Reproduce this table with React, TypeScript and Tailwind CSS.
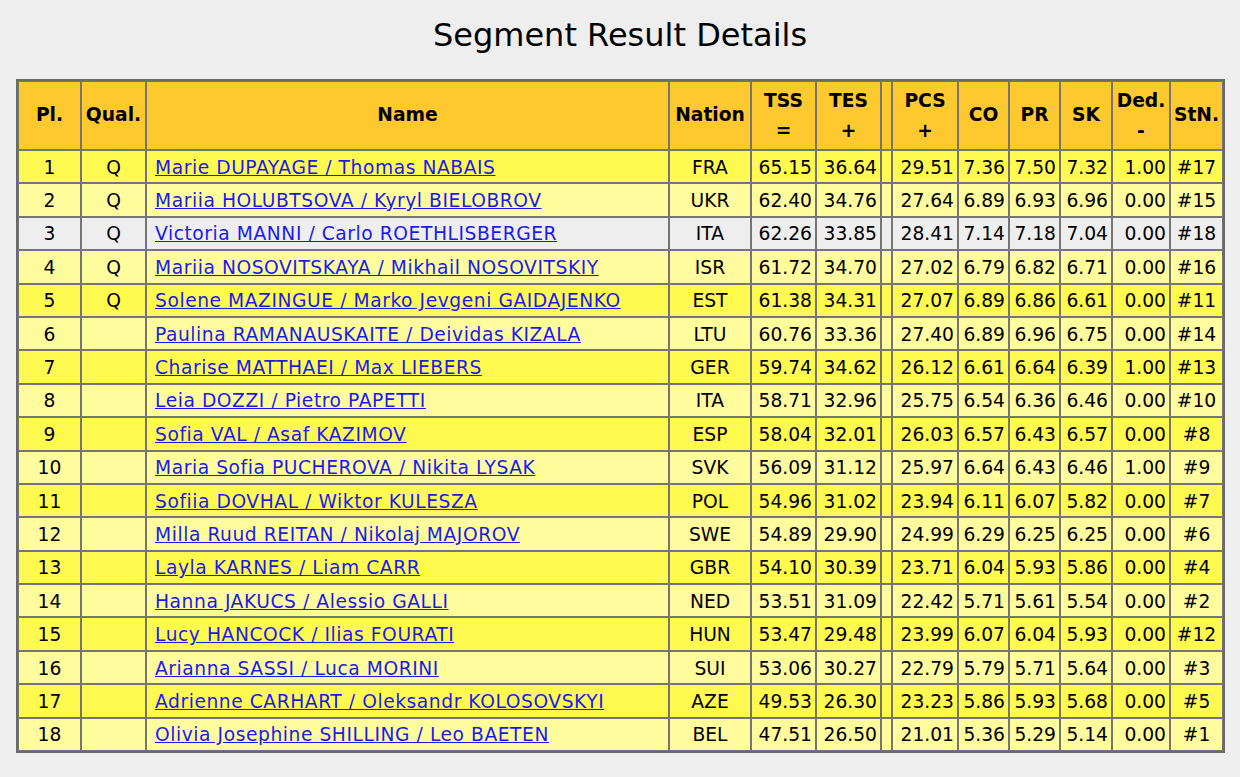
import React from "react";

type Row = {
  pl: number;
  q: string;
  name: string;
  nat: string;
  tss: string;
  tes: string;
  pcs: string;
  co: string;
  pr: string;
  sk: string;
  ded: string;
  stn: string;
};

const raw = `1|Q|Marie DUPAYAGE / Thomas NABAIS|FRA|65.15|36.64|29.51|7.36|7.50|7.32|1.00|#17
2|Q|Mariia HOLUBTSOVA / Kyryl BIELOBROV|UKR|62.40|34.76|27.64|6.89|6.93|6.96|0.00|#15
3|Q|Victoria MANNI / Carlo ROETHLISBERGER|ITA|62.26|33.85|28.41|7.14|7.18|7.04|0.00|#18
4|Q|Mariia NOSOVITSKAYA / Mikhail NOSOVITSKIY|ISR|61.72|34.70|27.02|6.79|6.82|6.71|0.00|#16
5|Q|Solene MAZINGUE / Marko Jevgeni GAIDAJENKO|EST|61.38|34.31|27.07|6.89|6.86|6.61|0.00|#11
6||Paulina RAMANAUSKAITE / Deividas KIZALA|LTU|60.76|33.36|27.40|6.89|6.96|6.75|0.00|#14
7||Charise MATTHAEI / Max LIEBERS|GER|59.74|34.62|26.12|6.61|6.64|6.39|1.00|#13
8||Leia DOZZI / Pietro PAPETTI|ITA|58.71|32.96|25.75|6.54|6.36|6.46|0.00|#10
9||Sofia VAL / Asaf KAZIMOV|ESP|58.04|32.01|26.03|6.57|6.43|6.57|0.00|#8
10||Maria Sofia PUCHEROVA / Nikita LYSAK|SVK|56.09|31.12|25.97|6.64|6.43|6.46|1.00|#9
11||Sofiia DOVHAL / Wiktor KULESZA|POL|54.96|31.02|23.94|6.11|6.07|5.82|0.00|#7
12||Milla Ruud REITAN / Nikolaj MAJOROV|SWE|54.89|29.90|24.99|6.29|6.25|6.25|0.00|#6
13||Layla KARNES / Liam CARR|GBR|54.10|30.39|23.71|6.04|5.93|5.86|0.00|#4
14||Hanna JAKUCS / Alessio GALLI|NED|53.51|31.09|22.42|5.71|5.61|5.54|0.00|#2
15||Lucy HANCOCK / Ilias FOURATI|HUN|53.47|29.48|23.99|6.07|6.04|5.93|0.00|#12
16||Arianna SASSI / Luca MORINI|SUI|53.06|30.27|22.79|5.79|5.71|5.64|0.00|#3
17||Adrienne CARHART / Oleksandr KOLOSOVSKYI|AZE|49.53|26.30|23.23|5.86|5.93|5.68|0.00|#5
18||Olivia Josephine SHILLING / Leo BAETEN|BEL|47.51|26.50|21.01|5.36|5.29|5.14|0.00|#1`;

const rows: Row[] = raw.split("\n").map((l) => {
  const p = l.split("|");
  return {
    pl: Number(p[0]),
    q: p[1],
    name: p[2],
    nat: p[3],
    tss: p[4],
    tes: p[5],
    pcs: p[6],
    co: p[7],
    pr: p[8],
    sk: p[9],
    ded: p[10],
    stn: p[11],
  };
});

const cell = "border border-[#757575] flex items-center";
const body = `${cell} pt-[2px]`;
const num = `${body} justify-end pr-[3px]`;
const mid = `${body} justify-center`;

function Head({ top, bottom }: { top: string; bottom?: string }) {
  return (
    <div className={`${cell} justify-center bg-[#fdc92f] text-center font-bold`}>
      {bottom ? (
        <div className="leading-[30px]">
          {top}
          <br />
          {bottom}
        </div>
      ) : (
        top
      )}
    </div>
  );
}

function rowBg(r: Row) {
  if (r.pl === 3) return "bg-[#eeeeee]";
  return r.pl % 2 === 1 ? "bg-[#fffa50]" : "bg-[#fffc9e]";
}

export default function App() {
  return (
    <div className="min-h-[777px] bg-[#eeeeee] text-black font-['DejaVu_Sans',sans-serif]">
      <h1 className="pt-[16px] text-center text-[32px] leading-[38px] font-normal">Segment Result Details</h1>
      <div className="mt-[25px] ml-[16px] w-fit border-2 border-[#6a6a6a] text-[18.7px]">
        <div className="grid grid-cols-[63px_65px_523px_82px_65px_65px_11px_66px_51px_51px_52px_58px_53px] grid-rows-[69px_repeat(18,33.4px)]">
          <Head top="Pl." />
          <Head top="Qual." />
          <Head top="Name" />
          <Head top="Nation" />
          <Head top="TSS" bottom="=" />
          <Head top="TES" bottom="+" />
          <Head top="" />
          <Head top="PCS" bottom="+" />
          <Head top="CO" />
          <Head top="PR" />
          <Head top="SK" />
          <Head top="Ded." bottom="-" />
          <Head top="StN." />
          {rows.map((r) => {
            const bg = rowBg(r);
            return (
              <React.Fragment key={r.pl}>
                <div className={`${mid} ${bg}`}>{r.pl}</div>
                <div className={`${mid} ${bg}`}>{r.q}</div>
                <div className={`${body} ${bg} pl-2`}>
                  <a href="#" className="text-[#1a1aee] underline tracking-[0.55px]">
                    {r.name}
                  </a>
                </div>
                <div className={`${mid} ${bg}`}>{r.nat}</div>
                <div className={`${num} ${bg}`}>{r.tss}</div>
                <div className={`${num} ${bg}`}>{r.tes}</div>
                <div className={`${body} ${bg}`} />
                <div className={`${num} ${bg}`}>{r.pcs}</div>
                <div className={`${num} ${bg}`}>{r.co}</div>
                <div className={`${num} ${bg}`}>{r.pr}</div>
                <div className={`${num} ${bg}`}>{r.sk}</div>
                <div className={`${num} ${bg}`}>{r.ded}</div>
                <div className={`${mid} ${bg}`}>{r.stn}</div>
              </React.Fragment>
            );
          })}
        </div>
      </div>
    </div>
  );
}
